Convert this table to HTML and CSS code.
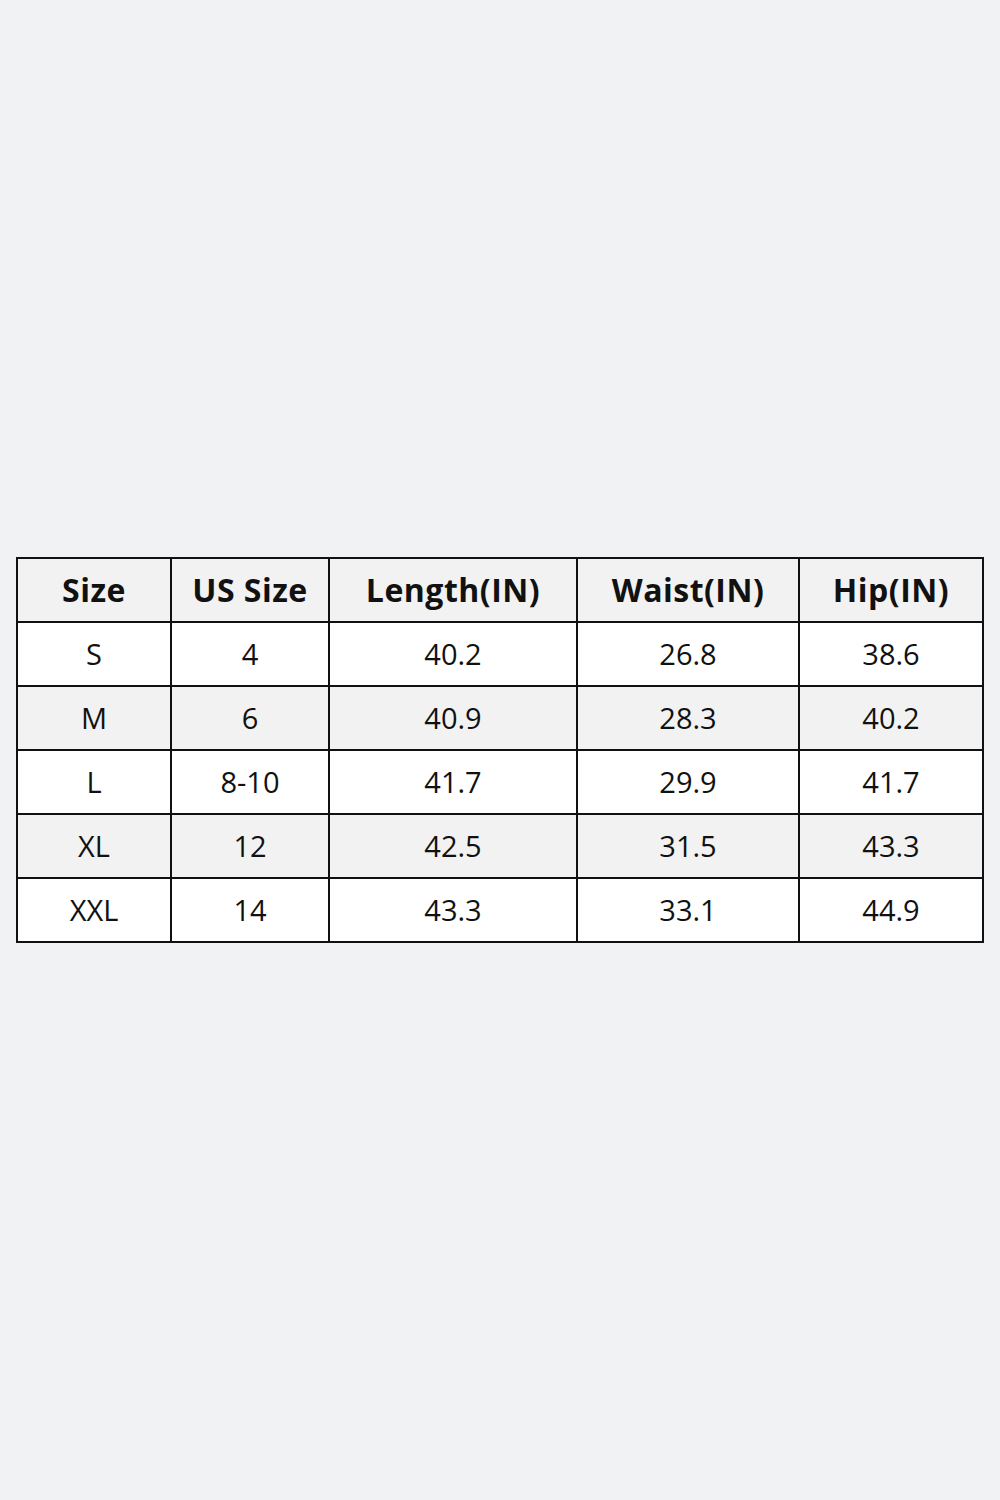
FILE: index.html
```html
<!DOCTYPE html>
<html>
<head>
<meta charset="utf-8">
<link rel="stylesheet" href="styles.css">
</head>
<body>
<div class="page">
<table class="sizes">
<colgroup>
<col class="c1"><col class="c2"><col class="c3"><col class="c4"><col class="c5">
</colgroup>
<thead>
<tr><th>Size</th><th>US Size</th><th>Length(IN)</th><th>Waist(IN)</th><th>Hip(IN)</th></tr>
</thead>
<tbody>
<tr><td>S</td><td>4</td><td>40.2</td><td>26.8</td><td>38.6</td></tr>
<tr class="alt"><td>M</td><td>6</td><td>40.9</td><td>28.3</td><td>40.2</td></tr>
<tr><td>L</td><td>8-10</td><td>41.7</td><td>29.9</td><td>41.7</td></tr>
<tr class="alt"><td>XL</td><td>12</td><td>42.5</td><td>31.5</td><td>43.3</td></tr>
<tr><td>XXL</td><td>14</td><td>43.3</td><td>33.1</td><td>44.9</td></tr>
</tbody>
</table>
</div>
</body>
</html>
```
FILE: styles.css
```css
html, body {
  margin: 0;
  padding: 0;
  background: #f1f2f4;
}
.page {
  width: 1000px;
  height: 1500px;
  box-sizing: border-box;
  padding: 557px 16px 0 16px;
}
.sizes {
  width: 968px;
  border-collapse: collapse;
  table-layout: fixed;
  font-family: "Open Sans", "Noto Sans", sans-serif;
  color: #111;
  background: #fff;
}
.c1 { width: 154px; }
.c2 { width: 158px; }
.c3 { width: 248px; }
.c4 { width: 222px; }
.c5 { width: 184px; }
.sizes th, .sizes td {
  border: 2px solid #111;
  height: 60px;
  padding: 0 0 2px 0;
  text-align: center;
  vertical-align: middle;
}
.sizes th {
  font-size: 32px;
  font-weight: 700;
  letter-spacing: 0.5px;
  background: #f2f2f2;
}
.sizes td {
  font-size: 29px;
  font-weight: 400;
}
.sizes tr.alt td {
  background: #f2f2f2;
}
```
